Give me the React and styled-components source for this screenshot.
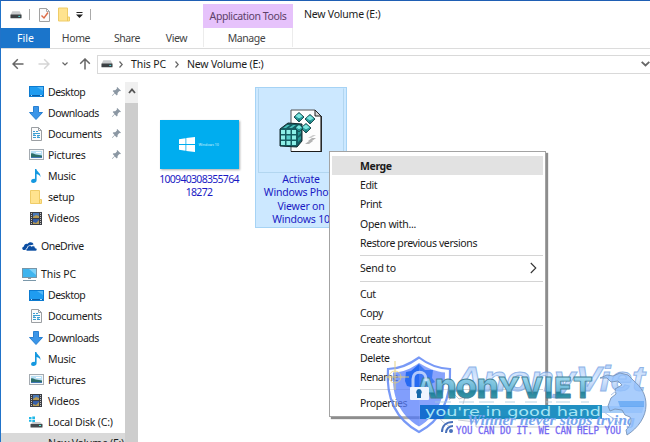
import React from "react";
import styled, { createGlobalStyle } from "styled-components";

const Global = createGlobalStyle`
  * { box-sizing: border-box; }
  body { margin: 0; background: #fff; overflow: hidden; }
  svg { display: block; flex: none; }
`;

const Window = styled.div`
  position: relative;
  width: 650px;
  height: 442px;
  overflow: hidden;
  display: flex;
  flex-direction: column;
  background: #fff;
  border-top: 1px solid #1f5fb4;
  border-left: 1px solid #2173c9;
  color: #1c1c1c;
  font: 10.5px/14px "Noto Sans", "Open Sans", sans-serif;
  letter-spacing: -0.3px;
  white-space: nowrap;
`;

const Header = styled.div`
  display: flex;
  height: 48px;
  border-bottom: 1px solid #dcdcdc;
`;
const HeaderLeft = styled.div`
  width: 202px;
`;
const QuickBar = styled.div`
  display: flex;
  align-items: center;
  height: 27px;
  padding-left: 8px;
`;
const QuickItem = styled.div`
  display: flex;
  justify-content: center;
  width: ${(p) => p.$w}px;
`;
const Divider = styled.div`
  width: 1px;
  height: 11px;
  background: #aaa;
`;
const Tabs = styled.div`
  display: flex;
  height: 20px;
`;
const Tab = styled.div`
  width: ${(p) => p.$w}px;
  line-height: 20px;
  text-align: center;
  letter-spacing: ${(p) => p.$ls ?? -0.4}px;
  color: ${(p) => (p.$active ? "#fff" : "#444")};
  background: ${(p) => (p.$active ? "#1b75cb" : "transparent")};
`;
const ToolTab = styled.div`
  width: 90px;
  height: 43px;
  margin-top: 3px;
  text-align: center;
  color: #444;
  border: 1px solid #ececec;
  border-width: 0 1px;
`;
const ToolName = styled.div`
  margin: 0 -1px;
  height: 24px;
  line-height: 25px;
  background: #e6c2fb;
  color: #5c4169;
  letter-spacing: -0.4px;
`;
const ToolLabel = styled.div`
  line-height: 20px;
  padding-right: 3px;
  letter-spacing: -0.45px;
`;
const WindowTitle = styled.div`
  padding: 6px 0 0 11px;
  letter-spacing: -0.22px;
`;

const AddressRow = styled.div`
  display: flex;
  align-items: center;
  height: 30px;
  padding-left: 4px;
`;
const NavIcon = styled.div`
  display: flex;
  width: ${(p) => p.$w}px;
  justify-content: center;
`;
const AddressBox = styled.div`
  flex: 1;
  display: flex;
  align-items: center;
  height: 19px;
  padding: 0 0 0 3px;
  border: 1px solid #d9d9d9;
  border-right: 0;
`;
const Crumb = styled.span`
  margin-left: ${(p) => p.$l || 0}px;
  letter-spacing: ${(p) => p.$ls || 0}px;
`;
const Spacer = styled.div`
  flex: 1;
`;

const Body = styled.div`
  flex: 1;
  min-height: 0;
  display: flex;
`;
const Tree = styled.div`
  width: 124px;
  padding-top: 2px;
  overflow: hidden;
`;
const Row = styled.div`
  display: flex;
  align-items: center;
  height: 21.1px;
  margin-top: ${(p) => p.$gap || 0}px;
  padding-left: ${(p) => (p.$root ? 20 : 27)}px;
  background: ${(p) => (p.$selected ? "#d9d9d9" : "transparent")};
`;
const RowIcon = styled.div`
  flex: none;
  width: 16px;
  margin-right: 4px;
  display: flex;
  justify-content: center;
`;
const RowText = styled.span`
  flex: 1;
  letter-spacing: ${(p) => p.$ls ?? -0.25}px;
`;
const PinSlot = styled.div`
  padding-right: 4px;
`;
const ScrollTrack = styled.div`
  width: 13px;
  margin-top: 3px;
  background: #cdcdcd;
`;
const ScrollUp = styled.div`
  display: flex;
  justify-content: center;
  padding-top: 6px;
  height: 21px;
  background: #f0f0f0;
`;
const Files = styled.div`
  flex: 1;
  display: flex;
  align-items: flex-start;
  padding: 8px 0 0 15px;
`;
const File = styled.div`
  display: flex;
  flex-direction: column;
  align-items: center;
  width: 92px;
  height: 141px;
  margin-right: 10px;
  color: #1a1ac4;
  text-align: center;
  line-height: 13.3px;
  letter-spacing: ${(p) => p.$ls || 0}px;
  background: ${(p) => (p.$selected ? "#cce8ff" : "transparent")};
  border: 1px solid ${(p) => (p.$selected ? "#a6d3f5" : "transparent")};
`;
const Preview = styled.div`
  flex: none;
  display: flex;
  align-items: center;
  justify-content: center;
  width: 86px;
  height: 85px;
  border: 1px solid ${(p) => (p.$selected ? "#b2d6f0" : "transparent")};
  border-top-color: transparent;
`;
const Thumb = styled.div`
  display: flex;
  align-items: center;
  width: 79px;
  height: 49px;
  margin-top: 27px;
  padding-left: 19px;
  gap: 4px;
  background: #00adef;
  box-shadow: 1px 1px 2px #aaa;
`;
const ThumbText = styled.span`
  color: #c4edfc;
  font-size: 3.6px;
  letter-spacing: 0;
  line-height: 5px;
`;

const Menu = styled.div`
  position: absolute;
  left: 328px;
  top: 150px;
  width: 217px;
  height: 266px;
  padding: 4px 2px;
  background: #fff;
  border: 1px solid #a3a3a3;
  box-shadow: 2px 2px 1px #8d8d8d;
  color: #1a1a1a;
`;
const MenuItem = styled.div`
  display: flex;
  align-items: center;
  justify-content: space-between;
  height: 19.3px;
  padding: 0 6px 0 28px;
  letter-spacing: ${(p) => p.$ls ?? -0.38}px;
  font-weight: ${(p) => (p.$strong ? 700 : 400)};
  background: ${(p) => (p.$strong ? "#e2e2e2" : "transparent")};
`;
const Rule = styled.div`
  height: 1px;
  margin: 2.6px 0 2.6px 28px;
  background: #d4d4d4;
`;
const Watermark = styled.svg`
  position: absolute;
  left: 379px;
  top: 344px;
`;

const Drive = () => (
  <svg width="12" height="8" viewBox="0 0 13 8">
    <path d="M2.5 0h8l2 4H.5z" fill="#c9cbcd" />
    <rect x=".5" y="3.5" width="12" height="4" rx=".6" fill="#3c4043" />
    <rect x="9" y="5" width="2" height="1" fill="#5ee" />
  </svg>
);
const FolderIcon = ({ w = 12, h = 14 }) => (
  <svg width={w} height={h} viewBox="0 0 12 14">
    <path d="M.5.5h9v9h2v4H.5z" fill="#ffe38f" stroke="#efcc68" />
    <path d="M9.5 9.5v4" stroke="#edc75c" />
  </svg>
);
const CheckDoc = () => (
  <svg width="11" height="14" viewBox="0 0 11 14">
    <path d="M.5.5h7l3 3v10H.5z" fill="#fafafa" stroke="#a2a2a2" />
    <path d="M7.5.5v3h3" fill="none" stroke="#aaa" />
    <path d="M2.5 7.5 5 10l4-5.5" fill="none" stroke="#dc6b45" strokeWidth="1.4" />
  </svg>
);
const QuickArrow = () => (
  <svg width="7" height="6" viewBox="0 0 7 6">
    <path d="M.5 0h6v1h-6zM0 2.5h7L3.5 6z" fill="#222" />
  </svg>
);
const Arrow = ({ color = "#666", turn = 0 }) => (
  <svg width="12" height="12" viewBox="0 0 12 12">
    <path
      d="M11.5 6H1.2M5.8 1.2 1 6l4.8 4.8"
      fill="none"
      stroke={color}
      strokeWidth="1.5"
      transform={`rotate(${turn} 6 6)`}
    />
  </svg>
);
const Chevron = ({ w = 6, h = 4, d = "M.5.5 3 3 5.5.5", color = "#666", sw = 1.2 }) => (
  <svg width={w} height={h} viewBox={`0 0 ${w} ${h}`}>
    <path d={d} fill="none" stroke={color} strokeWidth={sw} />
  </svg>
);
const Pin = () => (
  <svg width="9" height="9" viewBox="0 0 9 9">
    <path d="M5.2 0 9 3.8l-1 .5-.7-.2-1.7 1.8v1.7l-.8.8-2.1-2L.6 8.8 0 9l.2-.7L2.5 6 .7 4l.8-.7h1.7L5 1.6 4.7.7z" fill="#8b97a3" />
  </svg>
);
const DesktopIcon = () => (
  <svg width="15" height="11" viewBox="0 0 15 11">
    <rect x=".5" y=".5" width="14" height="10" fill="#1f9cf0" stroke="#0d7bd0" />
    <path d="M8 1h6v4z" fill="#55b9f8" />
    <path d="M1 9.5h13" stroke="#0b5ea8" />
    <path d="M2 9.5h1M11 9.5h2" stroke="#a8dcff" />
  </svg>
);
const DownloadIcon = () => (
  <svg width="14" height="14" viewBox="0 0 14 14">
    <path d="M4.5.5h5v6h4L7 13.5.5 6.5h4z" fill="#3a95e8" stroke="#2880d2" />
  </svg>
);
const DocIcon = () => (
  <svg width="11" height="14" viewBox="0 0 11 14">
    <path d="M.5.5h7l3 3v10H.5z" fill="#fbfbfb" stroke="#9b9fa3" />
    <path d="M7.5.5v3h3" fill="none" stroke="#9b9fa3" />
    <path d="M2 4.5h2M5 4.5h2M2 6.5h7M2 8.5h3M6 8.5h3M2 10.5h3M6 10.5h3" stroke="#3c9ed2" />
    <path d="M2 7.5h2M6 9.5h2" stroke="#86c3e5" />
  </svg>
);
const PictureIcon = () => (
  <svg width="15" height="11" viewBox="0 0 15 11">
    <rect x=".5" y=".5" width="14" height="10" fill="#f5f8fa" stroke="#a4abb1" />
    <rect x="2" y="2" width="11" height="7" fill="#b8dff5" />
    <path d="M2 4.5c2-1 3 .5 5 1s4 .5 6 1v2H2z" fill="#2c6e68" />
    <path d="M7 3.5h5" stroke="#fff" />
    <path d="M2 8.5h11" stroke="#4177b4" />
  </svg>
);
const MusicIcon = () => (
  <svg width="10" height="14" viewBox="0 0 10 14">
    <path d="M4 0h1.4c.2 3 4.6 3.3 4 8.2C9 6.2 7.5 5.4 5.6 5v6.2C5.6 13 4 14 2.3 14 .8 14 0 13 .1 12c.1-1.5 2-2.5 3.9-2.1z" fill="#1498e0" />
  </svg>
);
const VideoIcon = () => (
  <svg width="12" height="13" viewBox="0 0 12 13">
    <rect width="12" height="13" fill="#3b3e45" />
    <rect x="3" y="1" width="6" height="5" fill="#4a79b8" />
    <rect x="3" y="7" width="6" height="5" fill="#365fa8" />
    <path d="M3 5 6 3l3 1v2H3zM3 10l3 1 3-3v4H3z" fill="#b59a55" />
    <path d="M1.5 1v11M10.5 1v11" stroke="#c4c4c4" strokeDasharray="1 1" />
  </svg>
);
const CloudIcon = () => (
  <svg width="15" height="9" viewBox="0 0 15 9">
    <path d="M3.5 8H1.5C-.3 7.5-.2 4.8 2 4.4 2 2.5 4 1.2 5.5 2 7-.6 11-.4 11.5 2.5L6 4z" fill="#0b4ea2" />
    <path d="M5.5 9C3.6 9 3.6 6.4 5.4 6.2 5.5 3.8 8.2 2.8 9.6 4.4 11.2 3 13.3 4.3 13.2 6c2.4.2 2.2 3 .3 3z" fill="#0b4ea2" stroke="#fff" strokeWidth=".6" />
  </svg>
);
const PcIcon = () => (
  <svg width="15" height="13" viewBox="0 0 15 13">
    <rect x=".5" y=".5" width="14" height="9" fill="#3fb4ee" stroke="#7895a7" />
    <path d="M7 1h7v6z" fill="#7ed1f8" />
    <path d="M6 10h3v1H6z" fill="#8d9aa3" />
    <path d="M1 12.5h13" stroke="#7b98aa" />
  </svg>
);
const LocalDisk = () => (
  <svg width="14" height="12" viewBox="0 0 14 12">
    <path d="M0 1h2.5v2H0zM3.3.5H6V3H3.3zM0 3.8h2.5v2H0zM3.3 3.8H6v2.4H3.3z" fill="#20b8e8" />
    <path d="M4 6h7l2.5 2H1.5z" fill="#c8cacc" />
    <rect x="1.5" y="8" width="12" height="3.5" rx=".5" fill="#45494d" />
    <rect x="10" y="9" width="2" height="1" fill="#5fd" />
  </svg>
);
const WinLogo = () => (
  <svg width="16" height="15" viewBox="0 0 16 15">
    <path d="M0 2.2 6.5 1.2V7H0zM7.3 1.1 16 0v7H7.3zM0 7.9h6.5v5.9L0 12.8zM7.3 7.9H16V15l-8.7-1.1z" fill="#fff" />
  </svg>
);

const Cube = ({ x, y, s = 1 }) => (
  <g transform={`translate(${x} ${y}) scale(${s})`}>
    <path d="M0-4.5 5 0 0 5-5 0z" fill="#2b9c9c" stroke="#123f43" strokeWidth=".9" />
    <path d="M0-3.5 3.5-.8 0 1.5-3.5-1z" fill="#7de6df" />
    <path d="M0 1.5V4.5" stroke="#0d6668" />
  </g>
);
const RegIcon = () => (
  <svg width="44" height="44" viewBox="0 0 44 44">
    <path d="M12 1h24l6 6v35.500H12z" fill="#fdfdfd" stroke="#555" />
    <path d="M42.3 7v35.5H12" fill="none" stroke="#1c1c1c" strokeWidth="1.2" />
    <path d="M36 1v6h6z" fill="#d7d7d7" stroke="#222" />
    <path d="m29 32 4-3h4l-4 3zM26 35l4-3h4l-4 3z" fill="#b3b3b3" />
    <path d="m29 29 5-3h3l-5 3z" fill="#ccc" />
    <path d="m1 20 8-6 14 1v17l-5 6-17-1z" fill="#155e63" stroke="#142a2e" />
    {[0, 1, 2].map((r) =>
      [0, 1, 2].map((c) => (
        <rect key={`${r}${c}`} x={2 + c * 5.5} y={21 + r * 5.5} width="4" height="4" fill={r === 1 && c === 1 ? "#58cfca" : "#8df0e8"} />
      ))
    )}
    <path d="m4 19 4-3h3l-4 3zM10 19l4-3h3l-4 3zM16 19l3-3h3l-3 3z" fill="#49bdb9" />
    <path d="m19 23 3-2v3l-3 3zM19 29l3-2v3l-3 3z" fill="#2a9997" />
    <Cube x={20} y={8} />
    <Cube x={31} y={10} />
    <Cube x={27} y={19} />
    <Cube x={20} y={19} s={0.8} />
  </svg>
);

const Branding = () => (
  <Watermark width="271" height="97" viewBox="380 345 271 97">
    <defs>
      <linearGradient id="teal" x1="0" y1="0" x2="0" y2="1">
        <stop offset=".15" stopColor="#a5def2" />
        <stop offset=".6" stopColor="#64b5d6" />
        <stop offset=".64" stopColor="#1a7d97" />
        <stop offset=".95" stopColor="#3ba7b2" />
      </linearGradient>
      <linearGradient id="sky" x1="0" y1="0" x2="0" y2="1">
        <stop offset="0" stopColor="#8cb8f4" />
        <stop offset=".5" stopColor="#cfe3ff" />
        <stop offset="1" stopColor="#6fa2ea" />
      </linearGradient>
    </defs>
    <text x="455" y="391" fontFamily="Liberation Sans, sans-serif" fontSize="35" fontWeight="700" fontStyle="italic" letterSpacing="0" textLength="190" lengthAdjust="spacingAndGlyphs" fill="url(#sky)" stroke="#6c9be0" strokeWidth=".9" opacity=".75">
      AnonyViet
    </text>
    <g fill="none" stroke="#b7bec8" strokeWidth=".8">
      <path d="M449 400l5-6 5 5 6-2-2 7M446 405c-7 4-9 12-3 17l7 5M458 420l18 2v5h134" />
    </g>
    <path d="M419 357.5c9 7 20 11 31 11.5 1 26-6 50-31 63-24-13-33-36-31-63 12 0 22-5 31-11.5z" fill="#fff" fillOpacity=".25" stroke="#6087f5" strokeWidth="2.2" strokeOpacity=".85" />
    <path d="M419 363c8 5 17 9 26 9.5 0 24-6 42-26 54-20-12-27-30-26-54 10 0 18-4 26-9.5z" fill="#4570fb" fillOpacity=".68" />
    <path d="M406 372l5-1 8-7 6 6 8 0-1 8 3 4-8 4-5 4-15-4-2-5z" fill="#1660ef" fillOpacity=".85" />
    <path d="M419 364v62c20-12 26-30 26-54-9-1-18-4-26-9.5" fill="#a4bbff" opacity=".2" />
    <path d="M395 361v29M386 377h23" stroke="#e3ce79" strokeWidth=".9" />
    <circle cx="395" cy="377" r="6" fill="none" stroke="#e7cf72" opacity=".7" />
    <rect x="420" y="405" width="182" height="14" fill="#158abf" fillOpacity=".95" />
    <path d="M420 405h30l-7 14h-23z" fill="#1460d5" opacity=".65" />
    <path d="M602 406h42l-2 7h-40z" fill="#4c9cf2" opacity=".5" />
    <g fontFamily="Inter, sans-serif" fontWeight="800" fill="url(#teal)" stroke="#3b7d93" strokeWidth=".9" strokeLinejoin="round" letterSpacing="0" opacity=".95">
      <text y="398" fontSize="27" x="416">A</text>
      <text y="398" fontSize="35" x="434.5 455.5 476.5">non</text>
      <text y="398" fontSize="29" x="498 521 544.5 554 573">YVIET</text>
    </g>
    <path d="M413 388v-9c0-9 13-9 13 0v2" fill="none" stroke="#dfe8ff" strokeWidth="3" opacity=".75" />
    <rect x="410" y="387" width="19" height="13" rx="1" fill="#eef4ff" />
    <path d="M419 389a3 3 0 0 1 2 5v4h-4v-4a3 3 0 0 1 2-5z" fill="#1769a9" />
    <path d="M435 402h16M459 402h15M479 402h15M505 402h10M525 402h12M546 402h6M556 402h14M581 402h8" stroke="#a5c9df" strokeWidth="2" opacity=".4" />
    <text x="425" y="415.5" fontFamily="DejaVu Sans, sans-serif" fontSize="12" fill="#a6e5f4" letterSpacing="0" textLength="176" lengthAdjust="spacingAndGlyphs">
      you're in good hand
    </text>
    <text x="467" y="425" fontFamily="Liberation Serif, serif" fontSize="14" fontWeight="700" fontStyle="italic" fill="#78a4ee" letterSpacing="0" textLength="168" lengthAdjust="spacingAndGlyphs">
      Winner never stops trying
    </text>
    <text x="456" y="433.8" fontFamily="DejaVu Sans Mono, monospace" fontSize="10" fill="#7568f2" stroke="#7568f2" strokeWidth=".3" letterSpacing="0" textLength="165" lengthAdjust="spacingAndGlyphs">
      YOU CAN DO IT. WE CAN HELP YOU
    </text>
    <g fill="none" stroke="#4870ba" strokeWidth="2">
      <path d="M442 432c0-6 4-10 11-10M446 433c0-4 3-7 7-7" />
      <circle cx="451" cy="431" r="1" fill="#4870ba" />
    </g>
    <path d="M600 378l7-3 6 1 7-3 8 2 6 6c7 6 12 13 12 24 0 12-8 23-19 30l-1-5c5-5 6-10 4-13l-5-2-3-5-7-1-5 2-2-5 3-8 5-4-1-5 7-4-4-4-7 1-4-4z" fill="#93c1fb" fillOpacity=".8" stroke="#7793b8" strokeWidth=".9" />
    <path d="M611 395l5-4M604 412l7 5 6 3 3 5" fill="none" stroke="#a9c2e8" />
    <path d="M618 401h26v6h-24z" fill="#3c91ee" opacity=".5" />
  </Watermark>
);

const quick = [
  ["Desktop", DesktopIcon, -0.5],
  ["Downloads", DownloadIcon, -0.45],
  ["Documents", DocIcon, -0.33],
  ["Pictures", PictureIcon],
  ["Music", MusicIcon],
  ["setup", FolderIcon],
  ["Videos", VideoIcon],
];
const pc = [
  ["Desktop", DesktopIcon, -0.5],
  ["Documents", DocIcon, -0.33],
  ["Downloads", DownloadIcon, -0.45],
  ["Music", MusicIcon],
  ["Pictures", PictureIcon],
  ["Videos", VideoIcon],
  ["Local Disk (C:)", LocalDisk, -0.2],
];
const TreeRow = ({ label, Icon, ls, root, gap, pinned, selected }) => (
  <Row $root={root} $gap={gap} $selected={selected}>
    <RowIcon>{Icon && <Icon />}</RowIcon>
    <RowText $ls={ls}>{label}</RowText>
    {pinned && <PinSlot><Pin /></PinSlot>}
  </Row>
);

export default function App() {
  return (
    <>
      <Global />
      <Window>
        <Header>
          <HeaderLeft>
            <QuickBar>
              <QuickItem $w={13}><Drive /></QuickItem>
              <QuickItem $w={14}><Divider /></QuickItem>
              <QuickItem $w={16}><CheckDoc /></QuickItem>
              <QuickItem $w={23}><FolderIcon w={12} h={15} /></QuickItem>
              <QuickItem $w={9}><QuickArrow /></QuickItem>
              <QuickItem $w={13}><Divider /></QuickItem>
            </QuickBar>
            <Tabs>
              <Tab $w={49} $active $ls={0}>File</Tab>
              <Tab $w={52}>Home</Tab>
              <Tab $w={50}>Share</Tab>
              <Tab $w={49}>View</Tab>
            </Tabs>
          </HeaderLeft>
          <ToolTab>
            <ToolName>Application Tools</ToolName>
            <ToolLabel>Manage</ToolLabel>
          </ToolTab>
          <WindowTitle>New Volume (E:)</WindowTitle>
        </Header>
        <AddressRow>
          <NavIcon $w={26}><Arrow /></NavIcon>
          <NavIcon $w={26}><Arrow color="#d5d5d5" turn={180} /></NavIcon>
          <NavIcon $w={16}><Chevron /></NavIcon>
          <NavIcon $w={24}><Arrow turn={90} /></NavIcon>
          <AddressBox>
            <Drive />
            <Crumb $l={6}><Chevron w={4} h={7} d="M.5.5 3.2 3.5.5 6.5" /></Crumb>
            <Crumb $l={8} $ls={-0.1}>This PC</Crumb>
            <Crumb $l={9}><Chevron w={4} h={7} d="M.5.5 3.2 3.5.5 6.5" /></Crumb>
            <Crumb $l={8} $ls={-0.22}>New Volume (E:)</Crumb>
            <Spacer />
            <Chevron w={9} h={6} d="M.7.8 4.5 4.5 8.3.8" sw={1.8} />
          </AddressBox>
        </AddressRow>
        <Body>
          <Tree>
            {quick.map(([label, Icon, ls], i) => (
              <TreeRow key={label} label={label} Icon={Icon} ls={ls} pinned={i < 4} />
            ))}
            <TreeRow label="OneDrive" Icon={CloudIcon} ls={-0.5} root gap={7} />
            <TreeRow label="This PC" Icon={PcIcon} ls={-0.1} root gap={7} />
            {pc.map(([label, Icon, ls]) => (
              <TreeRow key={label} label={label} Icon={Icon} ls={ls} />
            ))}
            <TreeRow label="New Volume (E:)" selected />
          </Tree>
          <ScrollTrack>
            <ScrollUp><Chevron w={8} h={6} d="M1 5 4 1.5 7 5" sw={1.8} color="#555" /></ScrollUp>
          </ScrollTrack>
          <Files>
            <File $ls={-0.7}>
              <Preview>
                <Thumb><WinLogo /><ThumbText>Windows 10</ThumbText></Thumb>
              </Preview>
              100940308355764<br />18272
            </File>
            <File $selected $ls={-0.2}>
              <Preview $selected><RegIcon /></Preview>
              Activate<br />Windows Photo<br />Viewer on<br />Windows 10
            </File>
          </Files>
        </Body>
        <Menu>
          <MenuItem $strong>Merge</MenuItem>
          <MenuItem>Edit</MenuItem>
          <MenuItem>Print</MenuItem>
          <MenuItem $ls={-0.28}>Open with...</MenuItem>
          <MenuItem>Restore previous versions</MenuItem>
          <Rule />
          <MenuItem $ls={-0.25}>Send to <Chevron w={7} h={12} d="M.8 1 5.8 6 .8 11" color="#333" sw={1.1} /></MenuItem>
          <Rule />
          <MenuItem>Cut</MenuItem>
          <MenuItem>Copy</MenuItem>
          <Rule />
          <MenuItem>Create shortcut</MenuItem>
          <MenuItem>Delete</MenuItem>
          <MenuItem>Rename</MenuItem>
          <Rule />
          <MenuItem>Properties</MenuItem>
        </Menu>
        <Branding />
      </Window>
    </>
  );
}
